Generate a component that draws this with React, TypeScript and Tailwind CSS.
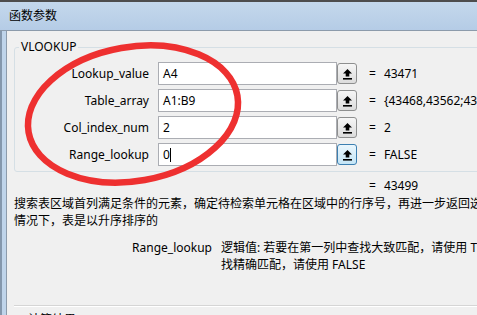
import React from "react";

const font = { fontFamily: '"Noto Sans", "Noto Sans CJK SC", sans-serif' };

function RefButton({ active }: { active?: boolean }) {
    return (
        <div
            className={`w-[20px] h-[21px] rounded-[3px] border flex items-center justify-center ${
                active
                    ? "border-[#3c7fb1] bg-gradient-to-b from-[#eaf6fd] to-[#c4e5f6]"
                    : "border-[#8e8f8f] bg-gradient-to-b from-[#f6f6f6] to-[#dcdcdc]"
            }`}
        >
            <svg width="11" height="12" viewBox="0 0 11 12">
                <path d="M5.5 1 L10 5.5 H7.3 V8.6 H3.7 V5.5 H1 Z" fill="#000" />
                <rect x="1" y="10" width="9" height="1.6" fill="#000" />
            </svg>
        </div>
    );
}

function ArgRow({ label, value, result, active, caret }: { label: string; value: string; result: string; active?: boolean; caret?: boolean }) {
    return (
        <div className="flex items-center h-[23px]">
            <div className="w-[134px] text-right whitespace-nowrap">{label}</div>
            <div className="ml-[9px] w-[179px] h-[23px] bg-white border border-[#abadb3] flex items-center pl-[4px]">
                <span>{value}</span>
                {caret && <span className="w-px h-[14px] bg-black"></span>}
            </div>
            <RefButton active={active} />
            <div className="ml-[12px]">=</div>
            <div className="ml-[8px] whitespace-nowrap">{result}</div>
        </div>
    );
}

export default function App() {
    return (
        <div className="w-[477px] h-[315px] overflow-hidden relative bg-[#f0f0f0] text-[12px] text-black" style={font}>
            <div className="h-[31px] border-t-2 border-t-[#4d4d4d] border-b border-b-[#8c9bab] bg-gradient-to-b from-[#c4d8ec] to-[#b5cce6] flex items-center pl-[9px] leading-[14px]">
                函数参数
            </div>

            <div className="flex h-[284px]">
                <div className="w-[7px] shrink-0 bg-[#bfd4ea] border-l-2 border-l-[#8497ac] border-r border-r-[#8c9bab]"></div>

                <div className="shrink-0 w-[600px] pl-[7px] leading-[14px]">
                    <fieldset className="border border-[#d5dfe5] rounded-[3px] mt-[9px] pt-[8px] pb-[5px] flex flex-col gap-[4px]">
                        <legend className="ml-[4px] px-[2px] leading-[14px]">VLOOKUP</legend>
                        <ArgRow label="Lookup_value" value="A4" result="43471" />
                        <ArgRow label="Table_array" value="A1:B9" result="{43468,43562;43471,43500;43499,43519}" />
                        <ArgRow label="Col_index_num" value="2" result="2" />
                        <ArgRow label="Range_lookup" value="0" result="FALSE" active caret />
                    </fieldset>

                    <div className="flex mt-[7px] h-[14px]">
                        <div className="w-[355px]"></div>
                        <div>=</div>
                        <div className="ml-[8px]">43499</div>
                    </div>

                    <div className="mt-[2px] leading-[17px] whitespace-nowrap">
                        <div>搜索表区域首列满足条件的元素，确定待检索单元格在区域中的行序号，再进一步返回选定单元格的值。默认</div>
                        <div>情况下，表是以升序排序的</div>
                    </div>

                    <div className="flex mt-[10px] leading-[17px] whitespace-nowrap">
                        <div className="w-[198px] text-right">Range_lookup</div>
                        <div className="ml-[9px]">
                            <div>逻辑值: 若要在第一列中查找大致匹配，请使用 TRUE 或省略；若要查</div>
                            <div>找精确匹配，请使用 FALSE</div>
                        </div>
                    </div>

                    <div className="mt-[32px] border-t border-t-[#d5d5d5] border-b border-b-white"></div>

                    <div className="mt-[6px] pl-[14px] whitespace-nowrap">计算结果 = 43499</div>
                </div>
            </div>

            <svg className="absolute inset-0 pointer-events-none" width="477" height="315">
                <ellipse cx="133" cy="114" rx="106" ry="67" transform="rotate(-10 133 114)" fill="none" stroke="#ee3030" strokeWidth="6.5" />
            </svg>
        </div>
    );
}
